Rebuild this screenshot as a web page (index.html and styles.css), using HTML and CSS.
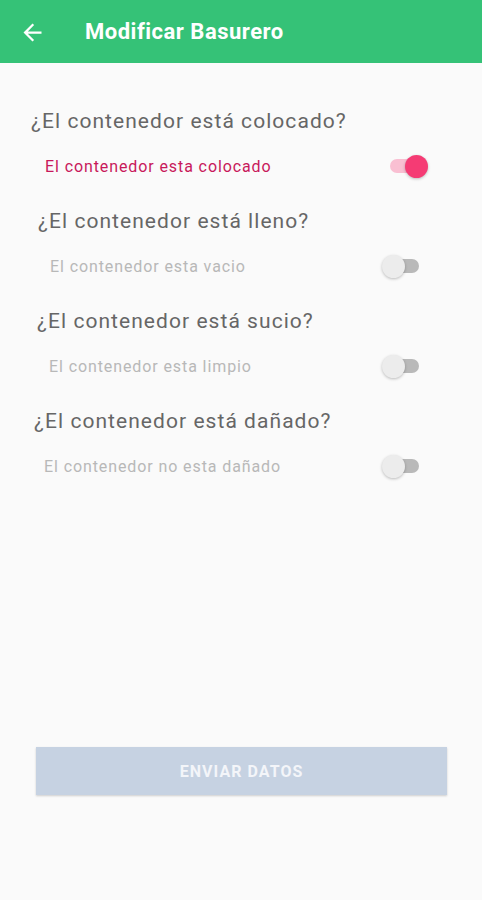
FILE: index.html
```html
<!DOCTYPE html>
<html lang="es">
<head>
<meta charset="utf-8">
<title>Modificar Basurero</title>
<link rel="stylesheet" href="styles.css">
</head>
<body>
<header class="appbar">
  <svg class="back" viewBox="0 0 24 24" aria-hidden="true"><path d="M20 11H7.83l5.59-5.59L12 4l-8 8 8 8 1.41-1.41L7.83 13H20v-2z"/></svg>
  <h1 class="title">Modificar Basurero</h1>
</header>
<main class="content">
  <section class="sec sec-1">
    <h2 class="question">¿El contenedor está colocado?</h2>
    <div class="row">
      <span class="label label--on">El contenedor esta colocado</span>
      <span class="switch switch--on"><span class="thumb"></span></span>
    </div>
  </section>
  <section class="sec sec-2">
    <h2 class="question">¿El contenedor está lleno?</h2>
    <div class="row">
      <span class="label">El contenedor esta vacio</span>
      <span class="switch"><span class="thumb"></span></span>
    </div>
  </section>
  <section class="sec sec-3">
    <h2 class="question">¿El contenedor está sucio?</h2>
    <div class="row">
      <span class="label">El contenedor esta limpio</span>
      <span class="switch"><span class="thumb"></span></span>
    </div>
  </section>
  <section class="sec sec-4">
    <h2 class="question">¿El contenedor está dañado?</h2>
    <div class="row">
      <span class="label">El contenedor no esta dañado</span>
      <span class="switch"><span class="thumb"></span></span>
    </div>
  </section>
  <button class="submit" type="button">ENVIAR DATOS</button>
</main>
</body>
</html>
```
FILE: styles.css
```css
* { box-sizing: border-box; }
html, body { margin: 0; padding: 0; }
body {
  width: 482px;
  height: 900px;
  background: #fafafa;
  font-family: Roboto, "Liberation Sans", sans-serif;
  overflow: hidden;
}
.appbar {
  height: 63px;
  background: #35c277;
  display: flex;
  align-items: center;
  padding-left: 19px;
}
.back {
  width: 27px;
  height: 27px;
  fill: #ffffff;
  margin-top: 1px;
}
.title {
  margin: 0 0 0 39px;
  color: #ffffff;
  font-size: 22px;
  font-weight: 700;
  letter-spacing: 0.5px;
}
.content {
  padding-top: 44px;
}
.sec {
  display: flex;
  flex-direction: column;
  gap: 15px;
  margin-bottom: 25px;
}
.question {
  margin: 0;
  height: 28px;
  line-height: 28px;
  font-size: 21px;
  font-weight: 400;
  letter-spacing: 1.05px;
  color: #666666;
  padding-left: var(--q);
}
.row {
  height: 32px;
  display: flex;
  align-items: center;
  justify-content: space-between;
  padding-left: var(--l);
  padding-right: var(--r);
}
.sec-1 { --q: 31px; --l: 45px; --r: 58px; }
.sec-2 { --q: 38px; --l: 50px; --r: 63px; }
.sec-3 { --q: 37px; --l: 49px; --r: 63px; }
.sec-4 { --q: 34px; --l: 44px; --r: 63px; }
.label {
  font-size: 16px;
  letter-spacing: 0.9px;
  color: #b8b8b8;
}
.label--on { color: #c8185a; }
.switch {
  position: relative;
  width: 34px;
  height: 14px;
  border-radius: 7px;
  background: #b9b9b9;
}
.thumb {
  position: absolute;
  top: -4.5px;
  left: -3.5px;
  width: 23px;
  height: 23px;
  border-radius: 50%;
  background: #ececec;
  box-shadow: 0 1px 3px rgba(0,0,0,0.25);
}
.switch--on { background: #f9bfd2; }
.switch--on .thumb {
  left: auto;
  right: -3.5px;
  background: #f53b74;
}
.submit {
  display: block;
  margin: 265px 0 0 36px;
  width: 411px;
  height: 48px;
  border: 0;
  background: #c6d2e2;
  color: #f3f5f9;
  font-family: Roboto, "Liberation Sans", sans-serif;
  font-size: 16px;
  font-weight: 700;
  letter-spacing: 1.05px;
  box-shadow: 0 1px 2px rgba(0,0,0,0.18);
}
```
